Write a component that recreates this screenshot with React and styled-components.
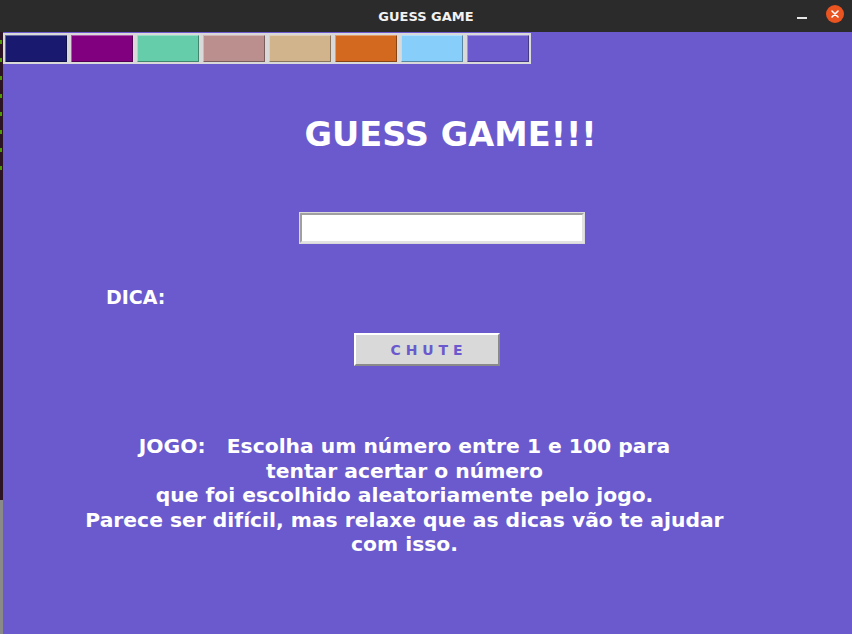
import styled, { createGlobalStyle } from 'styled-components';

const GlobalStyle = createGlobalStyle`
  html, body { margin: 0; padding: 0; background: #2b2b2b; }
  body { font-family: "DejaVu Sans", "Noto Sans", sans-serif; }
`;

const swatches = ['#191970', '#800080', '#66CDAA', '#BC8F8F', '#D2B48C', '#D2691E', '#87CEFA', '#6A5ACD'];

function App() {
  return (
    <Window>
      <GlobalStyle />
      <TitleBar>
        <span>GUESS GAME</span>
        <Controls>
          <Minimize />
          <Close>
            <svg width="10" height="10" viewBox="0 0 10 10">
              <path d="M2 2 L8 8 M8 2 L2 8" stroke="#fff" strokeWidth="1.6" strokeLinecap="round" />
            </svg>
          </Close>
        </Controls>
      </TitleBar>
      <Body>
        <Strip>
          {[0, 1, 2, 3, 4, 5, 6, 7].map((i) => <Dot key={i} />)}
        </Strip>
        <Main>
          <Palette>
            {swatches.map((c) => <Swatch key={c} color={c} />)}
          </Palette>
          <Title>GUESS GAME!!!</Title>
          <Entry type="text" />
          <Hint>DICA:</Hint>
          <Guess>C H U T E</Guess>
          <Rules>
            JOGO:&nbsp;&nbsp; Escolha um número entre 1 e 100 para <br />
            tentar acertar o número <br />
            que foi escolhido aleatoriamente pelo jogo. <br />
            Parece ser difícil, mas relaxe que as dicas vão te ajudar <br />
            com isso.
          </Rules>
        </Main>
      </Body>
    </Window>
  );
}

const Window = styled.div`
  width: 852px;
  height: 634px;
  display: flex;
  flex-direction: column;
  overflow: hidden;
`;

const TitleBar = styled.div`
  height: 32px;
  flex-shrink: 0;
  background: #2b2b2b;
  color: #f2f2f2;
  font-weight: bold;
  font-size: 13px;
  display: flex;
  align-items: center;
  justify-content: center;
  position: relative;
`;

const Controls = styled.div`
  position: absolute;
  right: 8px;
  top: 5px;
  display: flex;
  align-items: center;
  gap: 19px;
`;

const Minimize = styled.div`
  width: 10px;
  height: 2px;
  background: #e6e6e6;
  margin-top: 8px;
`;

const Close = styled.div`
  width: 18px;
  height: 18px;
  border-radius: 50%;
  background: #e95420;
  display: flex;
  align-items: center;
  justify-content: center;
`;

const Body = styled.div`
  flex: 1;
  display: flex;
`;

const Strip = styled.div`
  width: 3px;
  background: linear-gradient(#2c1424 0, #2c1424 468px, #8a8a8a 468px);
  display: flex;
  flex-direction: column;
  gap: 14px;
  padding-top: 8px;
`;

const Dot = styled.div`
  width: 2px;
  height: 4px;
  background: #4e9a06;
`;

const Main = styled.div`
  flex: 1;
  background: #6a5acd;
  display: flex;
  flex-direction: column;
  align-items: flex-start;
`;

const Palette = styled.div`
  display: flex;
  margin-top: 1px;
`;

const Swatch = styled.div`
  width: 62px;
  height: 27px;
  background: ${(p) => p.color};
  border: 1px solid #d9d9d9;
  box-shadow: inset 1px 1px 0 rgba(255, 255, 255, 0.35), inset -1px -1px 0 rgba(0, 0, 0, 0.35);
  outline: 1px solid #d9d9d9;
  margin: 1px;
`;

const Title = styled.h1`
  margin: 51px 0 0;
  align-self: center;
  margin-left: 46px;
  color: #fff;
  font-size: 33.6px;
  line-height: 40px;
  font-weight: bold;
`;

const Entry = styled.input`
  align-self: center;
  margin: 58px 0 0 28px;
  width: 280px;
  height: 26px;
  box-sizing: content-box;
  padding: 0;
  background: #fff;
  border: 2px solid;
  border-color: #a0a0a0 #e2e2e2 #e2e2e2 #a0a0a0;
  outline: 1px solid #d9d9d9;
`;

const Hint = styled.div`
  margin: 42px 0 0 103px;
  color: #fff;
  font-size: 19px;
  font-weight: bold;
  line-height: 24px;
`;

const Guess = styled.button`
  align-self: center;
  margin: 24px 0 0 -2px;
  width: 146px;
  height: 33px;
  background: #d9d9d9;
  border: 2px solid;
  border-color: #ffffff #8a8a8a #8a8a8a #ffffff;
  color: #6a5acd;
  font-family: "DejaVu Sans", sans-serif;
  font-weight: bold;
  font-size: 14px;
  padding: 0;
`;

const Rules = styled.p`
  align-self: center;
  margin: 68px 46px 0 0;
  color: #fff;
  text-align: center;
  font-size: 20.3px;
  font-weight: bold;
  line-height: 24.5px;
  white-space: nowrap;
`;

export default App;
